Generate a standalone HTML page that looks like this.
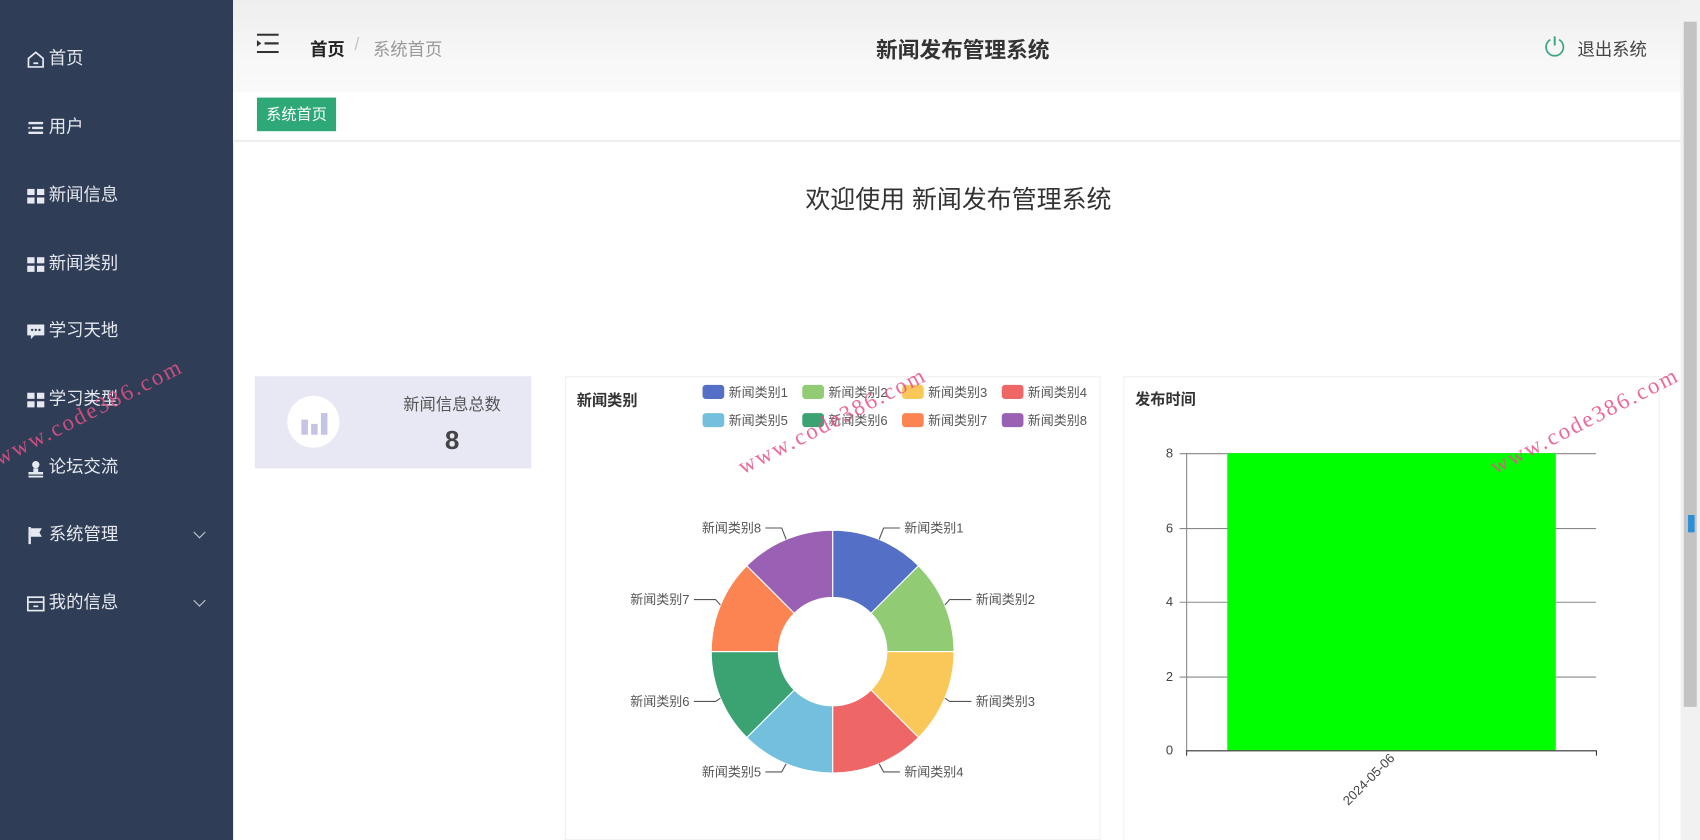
<!DOCTYPE html>
<html><head><meta charset="utf-8"><style>
*{margin:0;padding:0;box-sizing:border-box}
html,body{width:1700px;height:840px;overflow:hidden;background:#fff}
body{font-family:"Liberation Sans","Noto Sans CJK SC",sans-serif}
#w{position:absolute;left:0;top:0;width:1568px;height:775px;transform:scale(1.08418);transform-origin:0 0;overflow:hidden}
.abs{position:absolute}
#side{left:0;top:0;width:215px;height:775px;background:#2f3e56}
.mi{position:absolute;left:24px;color:#e6e9ef;font-size:16px;line-height:20px;display:flex;align-items:center}
.mi svg{margin-right:3px}
.chev{position:absolute;left:180px;width:8px;height:8px;border-right:1.5px solid #c5cad3;border-bottom:1.5px solid #c5cad3;transform:rotate(45deg)}
#hdr{left:215px;top:0;width:1335px;height:85px;background:linear-gradient(#eeeeee,#f7f7f7 60%,#fafafa)}
#tags{left:215px;top:85px;width:1335px;height:46px;background:#fff;border-bottom:2px solid #eceef0}
.card{background:#fff;border:1px solid #f0f0f0}
.wm{position:absolute;color:#e8508a;font-family:"Liberation Serif",serif;font-size:21px;letter-spacing:2px;transform:rotate(-27deg);transform-origin:0 100%;white-space:nowrap;opacity:.85}
</style></head><body><div id="w">
<div id="side" class="abs"></div>
<div class="mi" style="top:45px"><svg width="18" height="18" viewBox="0 0 16 16"><path d="M2 7 L8 2 L14 7 V14 H2 Z" fill="none" stroke="#e6e9ef" stroke-width="1.4"/><path d="M6 11 H10" stroke="#e6e9ef" stroke-width="1.4"/></svg>首页</div>
<div class="mi" style="top:108px"><svg width="18" height="18" viewBox="0 0 16 16"><path d="M2 4H14M5 8H14M2 12H14" stroke="#e6e9ef" stroke-width="2"/><path d="M2 7 L4 8 L2 9Z" fill="#e6e9ef"/></svg>用户</div>
<div class="mi" style="top:171px"><svg width="18" height="18" viewBox="0 0 16 16"><rect x="1" y="2" width="6" height="5" fill="#e6e9ef"/><rect x="9" y="2" width="6" height="5" fill="#e6e9ef"/><rect x="1" y="9" width="6" height="5" fill="#e6e9ef"/><rect x="9" y="9" width="6" height="5" fill="#e6e9ef"/></svg>新闻信息</div>
<div class="mi" style="top:234px"><svg width="18" height="18" viewBox="0 0 16 16"><rect x="1" y="2" width="6" height="5" fill="#e6e9ef"/><rect x="9" y="2" width="6" height="5" fill="#e6e9ef"/><rect x="1" y="9" width="6" height="5" fill="#e6e9ef"/><rect x="9" y="9" width="6" height="5" fill="#e6e9ef"/></svg>新闻类别</div>
<div class="mi" style="top:296px"><svg width="18" height="18" viewBox="0 0 16 16"><path d="M1 2H15V11H7L4 14V11H1Z" fill="#e6e9ef"/><circle cx="5" cy="6.5" r="1" fill="#2f3e56"/><circle cx="8" cy="6.5" r="1" fill="#2f3e56"/><circle cx="11" cy="6.5" r="1" fill="#2f3e56"/></svg>学习天地</div>
<div class="mi" style="top:359px"><svg width="18" height="18" viewBox="0 0 16 16"><rect x="1" y="2" width="6" height="5" fill="#e6e9ef"/><rect x="9" y="2" width="6" height="5" fill="#e6e9ef"/><rect x="1" y="9" width="6" height="5" fill="#e6e9ef"/><rect x="9" y="9" width="6" height="5" fill="#e6e9ef"/></svg>学习类型</div>
<div class="mi" style="top:422px"><svg width="18" height="18" viewBox="0 0 16 16"><circle cx="8" cy="5" r="3" fill="#e6e9ef"/><path d="M6 8H10V11H14V13H2V11H6Z" fill="#e6e9ef"/><rect x="2" y="14" width="12" height="1.5" fill="#e6e9ef"/></svg>论坛交流</div>
<div class="mi" style="top:484px"><svg width="18" height="18" viewBox="0 0 16 16"><path d="M3 1V15" stroke="#e6e9ef" stroke-width="2"/><path d="M4 2H13L11 5.5L13 9H4Z" fill="#e6e9ef"/></svg>系统管理</div>
<div class="chev" style="top:487px"></div>
<div class="mi" style="top:547px"><svg width="18" height="18" viewBox="0 0 16 16"><rect x="1.5" y="2.5" width="13" height="11" fill="none" stroke="#e6e9ef" stroke-width="1.4"/><path d="M1.5 6.5H14.5M6 10H10" stroke="#e6e9ef" stroke-width="1.4"/></svg>我的信息</div>
<div class="chev" style="top:550px"></div>
<div id="hdr" class="abs"></div>
<svg class="abs" style="left:236px;top:31px" width="22" height="18" viewBox="0 0 22 18"><path d="M1 1H21M8 9H21M1 17H21" stroke="#333" stroke-width="2"/><path d="M1 6L5 9L1 12Z" fill="#333"/></svg>
<div class="abs" style="left:286px;top:32px;font-size:16px;color:#222;font-weight:bold">首页</div>
<div class="abs" style="left:327px;top:33px;font-size:16px;color:#c0c4cc">/</div>
<div class="abs" style="left:344px;top:32px;font-size:16px;color:#999">系统首页</div>
<div class="abs" style="left:788px;top:30px;width:200px;text-align:center;font-size:20px;font-weight:bold;color:#333">新闻发布管理系统</div>
<svg class="abs" style="left:1424px;top:32px" width="20" height="21" viewBox="0 0 20 21"><path d="M6 4.5A8 8 0 1 0 14 4.5" fill="none" stroke="#3ea77f" stroke-width="1.6"/><path d="M10 1.5V10" stroke="#3ea77f" stroke-width="1.8"/></svg>
<div class="abs" style="left:1455px;top:32px;font-size:16px;color:#444">退出系统</div>
<div id="tags" class="abs"></div>
<div class="abs" style="left:237px;top:90px;width:73px;height:31px;background:#2fa878;color:#fff;font-size:14px;line-height:31px;text-align:center">系统首页</div>
<div class="abs" style="left:640px;top:165px;width:488px;text-align:center;font-size:23px;color:#333">欢迎使用 新闻发布管理系统</div>
<div class="abs" style="left:235px;top:347px;width:255px;height:85px;background:#e8e8f5"></div>
<div class="abs" style="left:265px;top:365px;width:48px;height:48px;border-radius:50%;background:#fff"></div>
<svg class="abs" style="left:276px;top:375px" width="28" height="28" viewBox="0 0 28 28"><rect x="2" y="12" width="6" height="14" fill="#c5c3e6"/><rect x="11" y="16" width="6" height="10" fill="#c5c3e6"/><rect x="20" y="6" width="6" height="20" fill="#c5c3e6"/></svg>
<div class="abs" style="left:357px;top:362px;width:120px;text-align:center;font-size:15px;color:#555">新闻信息总数</div>
<div class="abs" style="left:357px;top:393px;width:120px;text-align:center;font-size:24px;font-weight:bold;color:#444">8</div>
<div class="abs card" style="left:521px;top:347px;width:494px;height:428px"></div>
<div class="abs" style="left:532px;top:359px;font-size:14px;font-weight:bold;color:#333">新闻类别</div>
<svg class="abs" style="left:0;top:0" width="1568" height="775">
<g font-size="12" fill="#555" font-family="Liberation Sans,Noto Sans CJK SC,sans-serif">
<rect x="648" y="355" width="20" height="13" rx="3" fill="#5470c6"/><text x="672" y="366">新闻类别1</text>
<rect x="740" y="355" width="20" height="13" rx="3" fill="#91cc75"/><text x="764" y="366">新闻类别2</text>
<rect x="832" y="355" width="20" height="13" rx="3" fill="#fac858"/><text x="856" y="366">新闻类别3</text>
<rect x="924" y="355" width="20" height="13" rx="3" fill="#ee6666"/><text x="948" y="366">新闻类别4</text>
<rect x="648" y="381" width="20" height="13" rx="3" fill="#73c0de"/><text x="672" y="392">新闻类别5</text>
<rect x="740" y="381" width="20" height="13" rx="3" fill="#3ba272"/><text x="764" y="392">新闻类别6</text>
<rect x="832" y="381" width="20" height="13" rx="3" fill="#fc8452"/><text x="856" y="392">新闻类别7</text>
<rect x="924" y="381" width="20" height="13" rx="3" fill="#9a60b4"/><text x="948" y="392">新闻类别8</text>
</g>
<g stroke="#fff" stroke-width="1">
<path d="M768 489A112 112 0 0 1 847.2 521.8L803.4 565.6A50 50 0 0 0 768 551Z" fill="#5470c6"/>
<path d="M847.2 521.8A112 112 0 0 1 880 601L818 601A50 50 0 0 0 803.4 565.6Z" fill="#91cc75"/>
<path d="M880 601A112 112 0 0 1 847.2 680.2L803.4 636.4A50 50 0 0 0 818 601Z" fill="#fac858"/>
<path d="M847.2 680.2A112 112 0 0 1 768 713L768 651A50 50 0 0 0 803.4 636.4Z" fill="#ee6666"/>
<path d="M768 713A112 112 0 0 1 688.8 680.2L732.6 636.4A50 50 0 0 0 768 651Z" fill="#73c0de"/>
<path d="M688.8 680.2A112 112 0 0 1 656 601L718 601A50 50 0 0 0 732.6 636.4Z" fill="#3ba272"/>
<path d="M656 601A112 112 0 0 1 688.8 521.8L732.6 565.6A50 50 0 0 0 718 601Z" fill="#fc8452"/>
<path d="M688.8 521.8A112 112 0 0 1 768 489L768 551A50 50 0 0 0 732.6 565.6Z" fill="#9a60b4"/>
</g>
<g fill="none" stroke="#555" stroke-width="1">
<polyline points="810.9,497.5 815,487 830,487"/><polyline points="871.5,558 876,553 896,553"/>
<polyline points="871.5,644 876,647 896,647"/><polyline points="810.9,704.5 815,712 830,712"/>
<polyline points="725.1,704.5 721,712 706,712"/><polyline points="664.5,644 660,647 640,647"/>
<polyline points="664.5,558 660,553 640,553"/><polyline points="725.1,497.5 721,487 706,487"/>
</g>
<g font-size="12" fill="#555" font-family="Liberation Sans,Noto Sans CJK SC,sans-serif">
<text x="834" y="491">新闻类别1</text><text x="900" y="557">新闻类别2</text>
<text x="900" y="651">新闻类别3</text><text x="834" y="716">新闻类别4</text>
<text x="702" y="716" text-anchor="end">新闻类别5</text><text x="636" y="651" text-anchor="end">新闻类别6</text>
<text x="636" y="557" text-anchor="end">新闻类别7</text><text x="702" y="491" text-anchor="end">新闻类别8</text>
</g>
<rect x="1036.5" y="347.5" width="494" height="428" fill="#fff" stroke="#f0f0f0"/>
<text x="1047" y="373" font-size="14" font-weight="bold" fill="#333" font-family="Liberation Sans,Noto Sans CJK SC,sans-serif">发布时间</text>
<g stroke="#888" stroke-width="1">
<path d="M1088 418.5H1472M1088 487.5H1472M1088 555.5H1472M1088 624.5H1472"/>
<path d="M1094.5 418V692"/>
</g>
<rect x="1132" y="418" width="303" height="274" fill="#00ff00"/>
<path d="M1094 692.5H1472M1094.5 692V697M1472.5 692V697" stroke="#333" stroke-width="1"/>
<g font-size="12" fill="#444" text-anchor="end" font-family="Liberation Sans,sans-serif">
<text x="1082" y="422">8</text><text x="1082" y="491">6</text><text x="1082" y="559">4</text><text x="1082" y="628">2</text><text x="1082" y="696">0</text>
<text x="1287" y="700" transform="rotate(-45 1287 700)">2024-05-06</text>
</g>
</svg>
<div class="abs" style="left:1550px;top:0;width:18px;height:775px;background:#f1f1f1"></div>
<div class="abs" style="left:1553px;top:20px;width:12px;height:632px;background:#c3c3c3"></div>
<div class="abs" style="left:1557px;top:475px;width:6px;height:16px;background:#2a8fd6"></div>
<div class="wm" style="left:2px;top:410px">www.code386.com</div>
<div class="wm" style="left:688px;top:418px">www.code386.com</div>
<div class="wm" style="left:1382px;top:418px">www.code386.com</div>
</div></body></html>
